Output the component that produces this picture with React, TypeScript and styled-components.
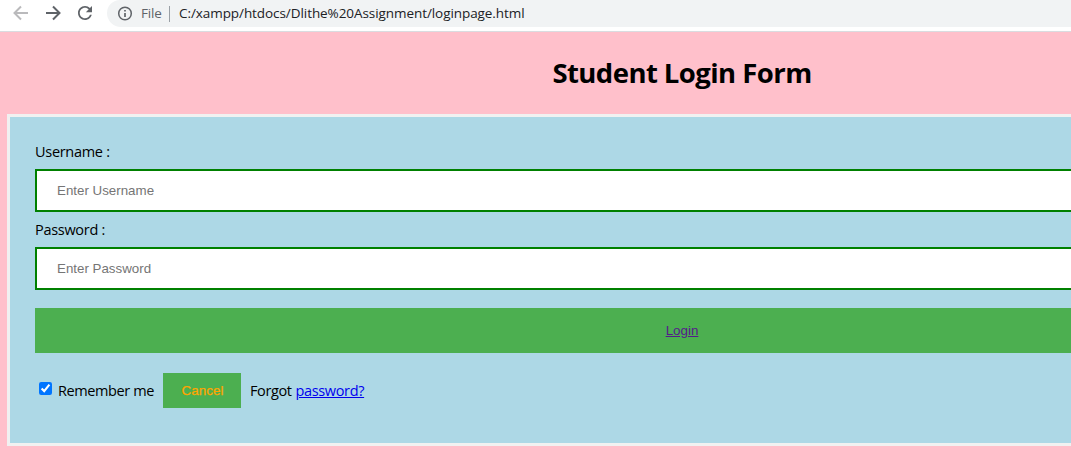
import React from "react";
import styled, { createGlobalStyle } from "styled-components";

const GlobalStyle = createGlobalStyle`
  *, *::before, *::after { box-sizing: border-box; }
  html, body { margin: 0; padding: 0; height: 456px; overflow: hidden; background: pink; }
`;

const Window = styled.div`
  width: 1071px;
  height: 456px;
  overflow: hidden;
  background: pink;
`;

const Toolbar = styled.header`
  display: flex;
  align-items: flex-start;
  width: 1364px;
  height: 32px;
  background: #fff;
  border-bottom: 1px solid #dadce0;
`;

const NavIcons = styled.nav`
  display: flex;
  width: 107px;
  height: 27px;
  flex: none;

  svg { display: block; flex: none; }
`;

const AddressBar = styled.div`
  display: flex;
  align-items: center;
  flex: 1;
  height: 27px;
  padding-left: 10px;
  background: #f1f3f4;
  border-radius: 13px 0 0 14px;
  font-family: "Open Sans", sans-serif;
  font-size: 13.5px;
  line-height: 27px;
`;

const Scheme = styled.span`
  width: 28px;
  padding-right: 7px;
  margin-left: 8px;
  color: #5f6368;
  letter-spacing: -0.15px;
`;

const Divider = styled.span`
  width: 1px;
  height: 16px;
  background: #9aa0a6;
`;

const Url = styled.span`
  margin-left: 9px;
  color: #202124;
  white-space: nowrap;
  letter-spacing: -0.07px;
`;

const Page = styled.main`
  display: flex;
  flex-direction: column;
  width: 1364px;
  padding: 0 7px;
  font-family: "Open Sans", sans-serif;
  color: #000;
`;

const Title = styled.h1`
  margin: 0;
  height: 82px;
  line-height: 82px;
  text-align: center;
  font-size: 27.5px;
  font-weight: 700;
  letter-spacing: -0.56px;
`;

const Form = styled.form`
  display: flex;
  flex-direction: column;
  height: 332px;
  padding: 18px 25px 0;
  border: 3px solid #f1f1f1;
  background: lightblue;
`;

const Label = styled.label`
  height: 34px;
  line-height: 34px;
  font-size: 14.5px;
  letter-spacing: -0.3px;
`;

const Field = styled.input`
  height: 43px;
  margin: 0 0 1px;
  padding: 12px 20px;
  border: 2px solid green;
  border-radius: 0;
  background: #fff;
  outline: none;
  font-family: "Liberation Sans", Arial, sans-serif;
  font-size: 13.333px;

  &::placeholder { color: #757575; opacity: 1; }
`;

const LoginButton = styled.button`
  height: 45px;
  margin-top: 17px;
  padding: 0;
  border: 0;
  background: #4caf50;
  font-family: "Liberation Sans", Arial, sans-serif;
  font-size: 13.333px;

  a { color: #551a8b; text-decoration: underline; }
`;

const Actions = styled.div`
  display: flex;
  align-items: center;
  height: 35px;
  margin-top: 20px;
  font-size: 14.5px;
  line-height: 34px;
  letter-spacing: -0.4px;
  white-space: nowrap;
`;

const Remember = styled.label`
  display: flex;
  align-items: center;
  width: 128px;
`;

const Checkbox = styled.input`
  width: 13px;
  height: 13px;
  margin: 0 6px 4px 4px;
`;

const CancelButton = styled.button`
  width: 78px;
  height: 35px;
  margin-right: 9px;
  padding: 0 0 0 1px;
  border: 0;
  background: #4caf50;
  color: orange;
  font-family: "Liberation Sans", Arial, sans-serif;
  font-size: 13.333px;
  letter-spacing: 0.1px;
  -webkit-text-stroke: 0.25px orange;
`;

const ForgotLink = styled.a`
  margin-left: 4px;
  color: #0000ee;
  text-decoration: underline;
  letter-spacing: -0.35px;
`;

export default function App() {
  return (
    <Window>
      <GlobalStyle />
      <Toolbar>
        <NavIcons>
          <svg width="107" height="27" viewBox="0 0 107 27" fill="none" strokeWidth="2">
            <path d="M28 13H15M21 6.5L14.5 13L21 19.5" stroke="#bababc" />
            <path d="M46 13H59M53 6.5L59.5 13L53 19.5" stroke="#5f6368" />
            <path
              transform="translate(74.5 2.5) scale(0.875)"
              fill="#5f6368"
              d="M17.65 6.35C16.2 4.9 14.21 4 12 4c-4.42 0-7.99 3.58-7.99 8s3.57 8 7.99 8c3.73 0 6.84-2.55 7.73-6h-2.08c-.82 2.33-3.04 4-5.65 4-3.31 0-6-2.69-6-6s2.69-6 6-6c1.66 0 3.14.69 4.22 1.78L13 11h7V4l-2.35 2.35z"
            />
          </svg>
        </NavIcons>
        <AddressBar>
          <svg width="16" height="16" viewBox="0 0 16 16" fill="none">
            <circle cx="8" cy="7.5" r="6.3" stroke="#5f6368" strokeWidth="1.5" />
            <path d="M8 7V11M8 4V5.6" stroke="#5f6368" strokeWidth="1.7" />
          </svg>
          <Scheme>File</Scheme>
          <Divider />
          <Url>C:/xampp/htdocs/Dlithe%20Assignment/loginpage.html</Url>
        </AddressBar>
      </Toolbar>
      <Page>
        <Title>Student Login Form</Title>
        <Form onSubmit={(e) => e.preventDefault()}>
          <Label htmlFor="username">Username :</Label>
          <Field id="username" type="text" placeholder="Enter Username" />
          <Label htmlFor="password">Password :</Label>
          <Field id="password" type="password" placeholder="Enter Password" />
          <LoginButton type="submit"><a href="#login">Login</a></LoginButton>
          <Actions>
            <Remember><Checkbox type="checkbox" defaultChecked />Remember me</Remember>
            <CancelButton type="button">Cancel</CancelButton>
            Forgot <ForgotLink href="#forgot">password?</ForgotLink>
          </Actions>
        </Form>
      </Page>
    </Window>
  );
}
